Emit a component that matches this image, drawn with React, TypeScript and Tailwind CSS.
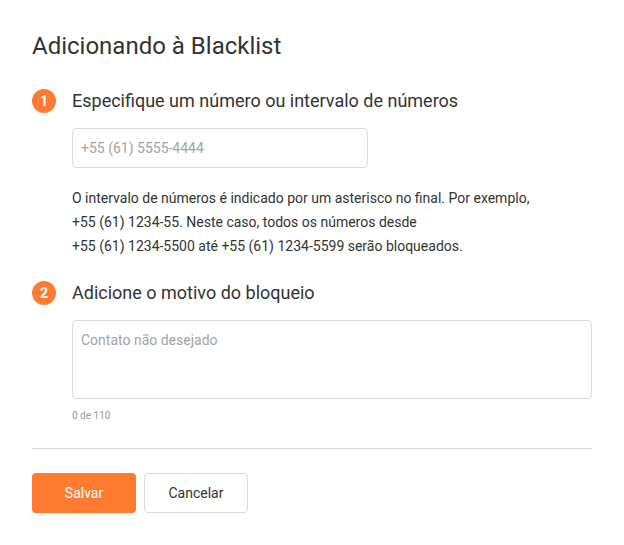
import React, { useState } from 'react';

const MAX = 110;

const Step: React.FC<{ n: number; title: string }> = ({ n, title }) => (
    <div className="flex items-center gap-4">
        <div className="w-6 h-6 rounded-full bg-[#ff7b31] text-white text-[14px] font-bold flex items-center justify-center shrink-0">
            {n}
        </div>
        <h2 className="text-[18px] text-[#333] leading-6">{title}</h2>
    </div>
);

export default function App() {
    const [reason, setReason] = useState('');

    return (
        <div className="w-[624px] h-[545px] bg-white px-8 pt-[30px] font-['Roboto',_'Liberation_Sans',_sans-serif] text-[#333]">
            <h1 className="text-[24px] leading-8 text-[#333]">Adicionando à Blacklist</h1>

            <div className="mt-[27px]">
                <Step n={1} title="Especifique um número ou intervalo de números" />
                <div className="pl-10">
                    <input
                        className="mt-[15px] w-[296px] h-10 border border-[#dadada] rounded px-2 text-[14px] placeholder:text-[#a3a3a3] outline-none"
                        placeholder="+55 (61) 5555-4444"
                    />
                    <p className="mt-[18px] text-[14px] leading-6 text-[#333]">
                        O intervalo de números é indicado por um asterisco no final. Por exemplo,
                        <br />
                        +55 (61) 1234-55. Neste caso, todos os números desde
                        <br />
                        +55 (61) 1234-5500 até +55 (61) 1234-5599 serão bloqueados.
                    </p>
                </div>
            </div>

            <div className="mt-[23px]">
                <Step n={2} title="Adicione o motivo do bloqueio" />
                <div className="pl-10">
                    <textarea
                        value={reason}
                        onChange={e => setReason(e.target.value.slice(0, MAX))}
                        className="mt-[15px] block w-full h-[79px] border border-[#dadada] rounded px-2 py-[9px] text-[14px] leading-5 placeholder:text-[#a3a3a3] outline-none resize-none"
                        placeholder="Contato não desejado"
                    />
                    <div className="mt-[11px] text-[10px] leading-3 text-[#999]">{reason.length} de {MAX}</div>
                </div>
            </div>

            <div className="mt-[26px] border-t border-[#dcdcdc]" />

            <div className="mt-6 flex gap-2">
                <button className="w-[104px] h-10 rounded bg-[#ff7b31] text-white text-[14px]">Salvar</button>
                <button className="w-[104px] h-10 rounded border border-[#dadada] bg-white text-[#333] text-[14px]">Cancelar</button>
            </div>
        </div>
    );
}
